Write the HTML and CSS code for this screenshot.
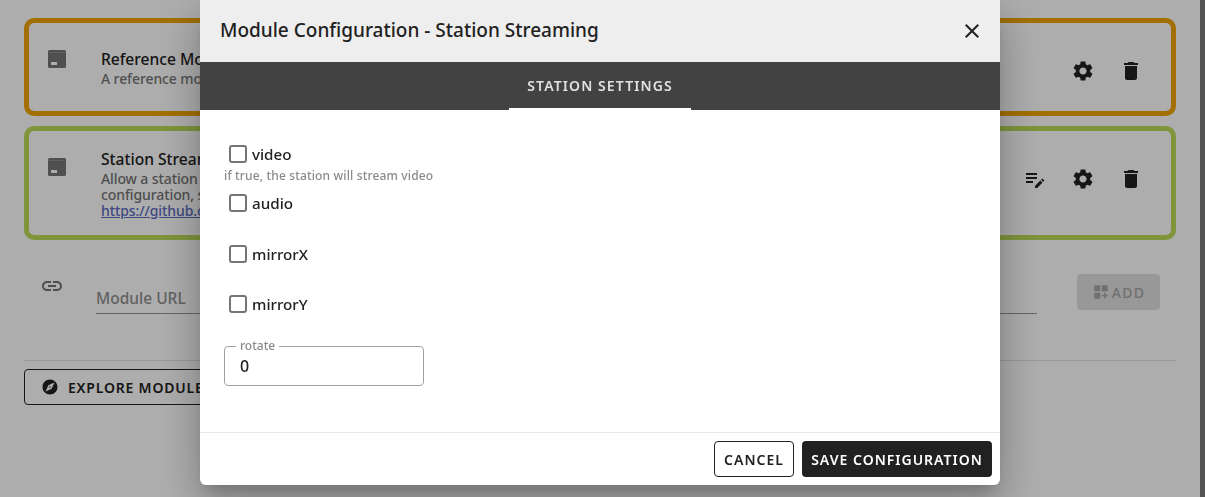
FILE: index.html
```html
<!DOCTYPE html>
<html>

<head>
    <meta charset='utf-8'>
    <title>Module Configuration</title>
    <meta name='viewport' content='width=device-width, initial-scale=1'>
    <link rel="stylesheet" href="styles.css">
</head>

<body>
    <main class="page">
        <div class="module-card card-orange">
            <svg class="module-icon" viewBox="0 0 18 18"><path d="M1.5 0h15A1.5 1.5 0 0 1 18 1.5v15a1.5 1.5 0 0 1-1.5 1.5h-15A1.5 1.5 0 0 1 0 16.5v-15A1.5 1.5 0 0 1 1.5 0zM3 12v3h6v-3z" fill-rule="evenodd"/><rect class="module-icon-line" x="1" y="2" width="16" height=".7"/></svg>
            <div class="module-text">
                <div class="module-title">Reference Module</div>
                <div class="module-desc">A reference module</div>
            </div>
            <div class="module-actions">
                <svg class="action-icon" viewBox="0 0 24 24"><path d="M19.14,12.94c0.04-0.3,0.06-0.61,0.06-0.94c0-0.32-0.02-0.64-0.07-0.94l2.03-1.58c0.18-0.14,0.23-0.41,0.12-0.61 l-1.92-3.32c-0.12-0.22-0.37-0.29-0.59-0.22l-2.39,0.96c-0.5-0.38-1.03-0.7-1.62-0.94L14.4,2.81c-0.04-0.24-0.24-0.41-0.48-0.41 h-3.84c-0.24,0-0.43,0.17-0.47,0.41L9.25,5.35C8.66,5.59,8.12,5.92,7.63,6.29L5.24,5.33c-0.22-0.08-0.47,0-0.59,0.22L2.74,8.87 C2.62,9.08,2.66,9.34,2.86,9.48l2.03,1.58C4.84,11.36,4.8,11.69,4.8,12s0.02,0.64,0.07,0.94l-2.03,1.58 c-0.18,0.14-0.23,0.41-0.12,0.61l1.92,3.32c0.12,0.22,0.37,0.29,0.59,0.22l2.39-0.96c0.5,0.38,1.03,0.7,1.62,0.94l0.36,2.54 c0.05,0.24,0.24,0.41,0.48,0.41h3.84c0.24,0,0.44-0.17,0.47-0.41l0.36-2.54c0.59-0.24,1.13-0.56,1.62-0.94l2.39,0.96 c0.22,0.08,0.47,0,0.59-0.22l1.92-3.32c0.12-0.22,0.07-0.47-0.12-0.61L19.14,12.94z M12,15.6c-1.98,0-3.6-1.62-3.6-3.6 s1.62-3.6,3.6-3.6s3.6,1.62,3.6,3.6S13.98,15.6,12,15.6z"/></svg>
                <svg class="action-icon" viewBox="0 0 24 24"><path d="M6 19c0 1.1.9 2 2 2h8c1.1 0 2-.9 2-2V7H6v12zM19 4h-3.5l-1-1h-5l-1 1H5v2h14V4z"/></svg>
            </div>
        </div>

        <div class="module-card card-green">
            <svg class="module-icon" viewBox="0 0 18 18"><path d="M1.5 0h15A1.5 1.5 0 0 1 18 1.5v15a1.5 1.5 0 0 1-1.5 1.5h-15A1.5 1.5 0 0 1 0 16.5v-15A1.5 1.5 0 0 1 1.5 0zM3 12v3h6v-3z" fill-rule="evenodd"/><rect class="module-icon-line" x="1" y="2" width="16" height=".7"/></svg>
            <div class="module-text">
                <div class="module-title">Station Streaming</div>
                <div class="module-desc">Allow a station to stream<br>configuration, see<br><a href="#">https://github.com</a></div>
            </div>
            <div class="module-actions">
                <svg class="action-icon" viewBox="0 0 24 24"><path d="M3 10h11v2H3zm0-2h11V6H3zm0 8h7v-2H3zm15.01-3.13.71-.71c.39-.39 1.02-.39 1.41 0l.71.71c.39.39.39 1.02 0 1.41l-.71.71zm-.71.71-5.3 5.3V21h2.12l5.3-5.3z"/></svg>
                <svg class="action-icon" viewBox="0 0 24 24"><path d="M19.14,12.94c0.04-0.3,0.06-0.61,0.06-0.94c0-0.32-0.02-0.64-0.07-0.94l2.03-1.58c0.18-0.14,0.23-0.41,0.12-0.61 l-1.92-3.32c-0.12-0.22-0.37-0.29-0.59-0.22l-2.39,0.96c-0.5-0.38-1.03-0.7-1.62-0.94L14.4,2.81c-0.04-0.24-0.24-0.41-0.48-0.41 h-3.84c-0.24,0-0.43,0.17-0.47,0.41L9.25,5.35C8.66,5.59,8.12,5.92,7.63,6.29L5.24,5.33c-0.22-0.08-0.47,0-0.59,0.22L2.74,8.87 C2.62,9.08,2.66,9.34,2.86,9.48l2.03,1.58C4.84,11.36,4.8,11.69,4.8,12s0.02,0.64,0.07,0.94l-2.03,1.58 c-0.18,0.14-0.23,0.41-0.12,0.61l1.92,3.32c0.12,0.22,0.37,0.29,0.59,0.22l2.39-0.96c0.5,0.38,1.03,0.7,1.62,0.94l0.36,2.54 c0.05,0.24,0.24,0.41,0.48,0.41h3.84c0.24,0,0.44-0.17,0.47-0.41l0.36-2.54c0.59-0.24,1.13-0.56,1.62-0.94l2.39,0.96 c0.22,0.08,0.47,0,0.59-0.22l1.92-3.32c0.12-0.22,0.07-0.47-0.12-0.61L19.14,12.94z M12,15.6c-1.98,0-3.6-1.62-3.6-3.6 s1.62-3.6,3.6-3.6s3.6,1.62,3.6,3.6S13.98,15.6,12,15.6z"/></svg>
                <svg class="action-icon" viewBox="0 0 24 24"><path d="M6 19c0 1.1.9 2 2 2h8c1.1 0 2-.9 2-2V7H6v12zM19 4h-3.5l-1-1h-5l-1 1H5v2h14V4z"/></svg>
            </div>
        </div>

        <div class="url-row">
            <svg class="url-icon" viewBox="0 0 24 24"><path d="M3.9 12c0-1.71 1.39-3.1 3.1-3.1h4V7H7c-2.76 0-5 2.24-5 5s2.24 5 5 5h4v-1.9H7c-1.71 0-3.1-1.39-3.1-3.1zM8 13h8v-2H8v2zm9-6h-4v1.9h4c1.71 0 3.1 1.39 3.1 3.1s-1.39 3.1-3.1 3.1h-4V17h4c2.76 0 5-2.24 5-5s-2.24-5-5-5z"/></svg>
            <div class="url-field">Module URL</div>
            <div class="add-btn">
                <svg class="add-icon" viewBox="0 0 24 24"><path d="M3 3h8v8H3zm10 0h8v8h-8zM3 13h8v8H3zm15 0h-2v3h-3v2h3v3h2v-3h3v-2h-3z"/></svg>
                ADD
            </div>
        </div>

        <hr class="divider">

        <div class="explore-btn">
            <svg class="explore-icon" viewBox="0 0 24 24"><path d="M12 10.9c-.61 0-1.1.49-1.1 1.1s.49 1.1 1.1 1.1c.61 0 1.1-.49 1.1-1.1s-.49-1.1-1.1-1.1zM12 2C6.48 2 2 6.48 2 12s4.48 10 10 10 10-4.48 10-10S17.52 2 12 2zm2.19 12.19L6 18l3.81-8.19L18 6l-3.81 8.19z"/></svg>
            EXPLORE MODULES
        </div>
    </main>
    <div class="scrollbar"></div>

    <div class="overlay">
        <div class="dialog">
            <div class="dialog-head">
                <h2 class="dialog-title">Module Configuration - Station Streaming</h2>
                <svg class="close-icon" viewBox="0 0 24 24"><path d="M19 6.41 17.59 5 12 10.59 6.41 5 5 6.41 10.59 12 5 17.59 6.41 19 12 13.41 17.59 19 19 17.59 13.41 12z"/></svg>
            </div>
            <div class="tabs">
                <div class="tab">STATION SETTINGS</div>
            </div>
            <div class="dialog-body">
                <label class="check-row"><span class="check-box"></span>video</label>
                <div class="hint">if true, the station will stream video</div>
                <label class="check-row"><span class="check-box"></span>audio</label>
                <label class="check-row spaced"><span class="check-box"></span>mirrorX</label>
                <label class="check-row spaced"><span class="check-box"></span>mirrorY</label>
                <div class="outlined">
                    <span class="outlined-label">rotate</span>
                    <span class="outlined-value">0</span>
                </div>
            </div>
            <div class="dialog-foot">
                <div class="btn btn-cancel">CANCEL</div>
                <div class="btn btn-save">SAVE CONFIGURATION</div>
            </div>
        </div>
    </div>
</body>

</html>
```

FILE: styles.css
```css
* {
    box-sizing: border-box;
}

body,
html {
    width: 100%;
    height: 100%;
    margin: 0;
    padding: 0;
    overflow: hidden;
    background: #fff;
    font-family: "Noto Sans", "Open Sans", sans-serif;
    color: #212121;
}

.page {
    width: 1200px;
    padding: 18px 24px 0;
}

.module-card {
    display: flex;
    align-items: flex-start;
    border: 5px solid;
    border-radius: 10px;
    margin-bottom: 10px;
    padding: 27px 19px 0;
}

.card-orange {
    border-color: #f0a400;
    height: 98px;
}

.card-green {
    border-color: #bbda58;
    height: 114px;
}

.module-icon {
    width: 18px;
    height: 18px;
    fill: #757575;
    flex: none;
}

.module-icon-line {
    fill: #9a9a9a;
}

.module-text {
    margin-left: 35px;
    flex: 1;
    align-self: center;
    margin-top: -27px;
}

.module-title {
    font-size: 15.6px;
    font-weight: 500;
    line-height: 24px;
}

.module-desc {
    font-size: 14px;
    font-weight: 500;
    line-height: 16px;
    letter-spacing: -.1px;
    color: #757575;
}

.module-desc a {
    color: #5c6bc0;
}

.module-actions {
    display: flex;
    gap: 24px;
    margin-top: 9px;
    padding-right: 9px;
}

.action-icon {
    width: 24px;
    height: 24px;
    fill: #212121;
}

.url-row {
    display: flex;
    align-items: flex-start;
    height: 110px;
    padding-top: 24px;
    margin-left: 16px;
}

.url-icon {
    width: 24px;
    height: 24px;
    fill: #757575;
}

.url-field {
    width: 941px;
    height: 28px;
    margin-left: 32px;
    margin-top: 12px;
    border-bottom: 1px solid #949494;
    font-size: 15.5px;
    font-weight: 500;
    line-height: 24px;
    color: #8f8f8f;
}

.add-btn {
    display: flex;
    align-items: center;
    justify-content: center;
    gap: 2px;
    width: 83px;
    height: 36px;
    margin-left: 40px;
    border-radius: 4px;
    background: #e0e0e0;
    color: #a6a6a6;
    font-size: 14px;
    font-weight: 500;
    letter-spacing: 1.25px;
}

.add-icon {
    width: 18px;
    height: 18px;
    fill: #a6a6a6;
}

.divider {
    border: 0;
    border-top: 1px solid #e0e0e0;
    margin: 0 0 8px;
}

.explore-btn {
    display: inline-flex;
    align-items: center;
    gap: 9px;
    height: 36px;
    padding: 0 16px;
    border: 1px solid #212121;
    border-radius: 4px;
    font-size: 14px;
    font-weight: 600;
    letter-spacing: .8px;
}

.explore-icon {
    width: 18px;
    height: 18px;
    fill: #212121;
}

.scrollbar {
    position: fixed;
    top: 0;
    right: 0;
    width: 5px;
    height: 100%;
    background: #7c7c7c;
}

/* dialog */
.overlay {
    position: fixed;
    inset: 0;
    background: rgba(0, 0, 0, .32);
}

.dialog {
    position: absolute;
    left: 200px;
    top: 0;
    width: 800px;
    height: 485px;
    display: flex;
    flex-direction: column;
    background: #fff;
    border-radius: 0 0 6px 6px;
    box-shadow: 0 11px 15px -7px rgba(0, 0, 0, .2), 0 24px 38px 3px rgba(0, 0, 0, .14), 0 9px 46px 8px rgba(0, 0, 0, .12);
}

.dialog-head {
    display: flex;
    align-items: center;
    justify-content: space-between;
    height: 62px;
    padding: 0 16px 0 20px;
    background: #eee;
}

.dialog-title {
    margin: 0 0 2px;
    font-size: 19px;
    font-weight: 500;
    color: #212121;
}

.close-icon {
    width: 24px;
    height: 24px;
    fill: #212121;
}

.tabs {
    display: flex;
    justify-content: center;
    height: 48px;
    background: #424242;
}

.tab {
    width: 182px;
    text-align: center;
    line-height: 48px;
    font-size: 14px;
    font-weight: 600;
    letter-spacing: 1.1px;
    color: #e0e0e0;
    border-bottom: 2px solid #fff;
}

.dialog-body {
    flex: 1;
    padding: 33px 24px 0;
}

.check-row {
    display: flex;
    align-items: center;
    gap: 5px;
    height: 22px;
    padding-left: 5px;
    font-size: 15.2px;
    font-weight: 500;
    color: #212121;
}

.check-row.spaced {
    margin-top: 28px;
}

.check-box {
    width: 18px;
    height: 18px;
    border: 2px solid #757575;
    border-radius: 3px;
}

.hint {
    font-size: 12px;
    font-weight: 500;
    line-height: 16px;
    letter-spacing: .15px;
    margin: 3px 0 8px;
    color: #8a8a8a;
}

.check-row.spaced:nth-of-type(3) {
    margin-top: 29px;
}

.outlined {
    position: relative;
    width: 200px;
    height: 40px;
    margin-top: 31px;
    padding-left: 15px;
    border: 1px solid #a0a0a0;
    border-radius: 4px;
    font-size: 16px;
    font-weight: 500;
    line-height: 38px;
}

.outlined-label {
    position: absolute;
    left: 11px;
    top: -8px;
    padding: 0 4px;
    background: #fff;
    font-size: 12px;
    line-height: 14px;
    color: #8a8a8a;
}

.dialog-foot {
    display: flex;
    justify-content: flex-end;
    gap: 8px;
    height: 53px;
    padding: 8px;
    border-top: 1px solid #e8e8e8;
}

.btn {
    display: flex;
    align-items: center;
    justify-content: center;
    height: 36px;
    border-radius: 4px;
    font-size: 14px;
    font-weight: 600;
    letter-spacing: 1px;
}

.btn-cancel {
    width: 80px;
    border: 1px solid #212121;
    color: #212121;
}

.btn-save {
    width: 190px;
    background: #212121;
    color: #fff;
}
```
